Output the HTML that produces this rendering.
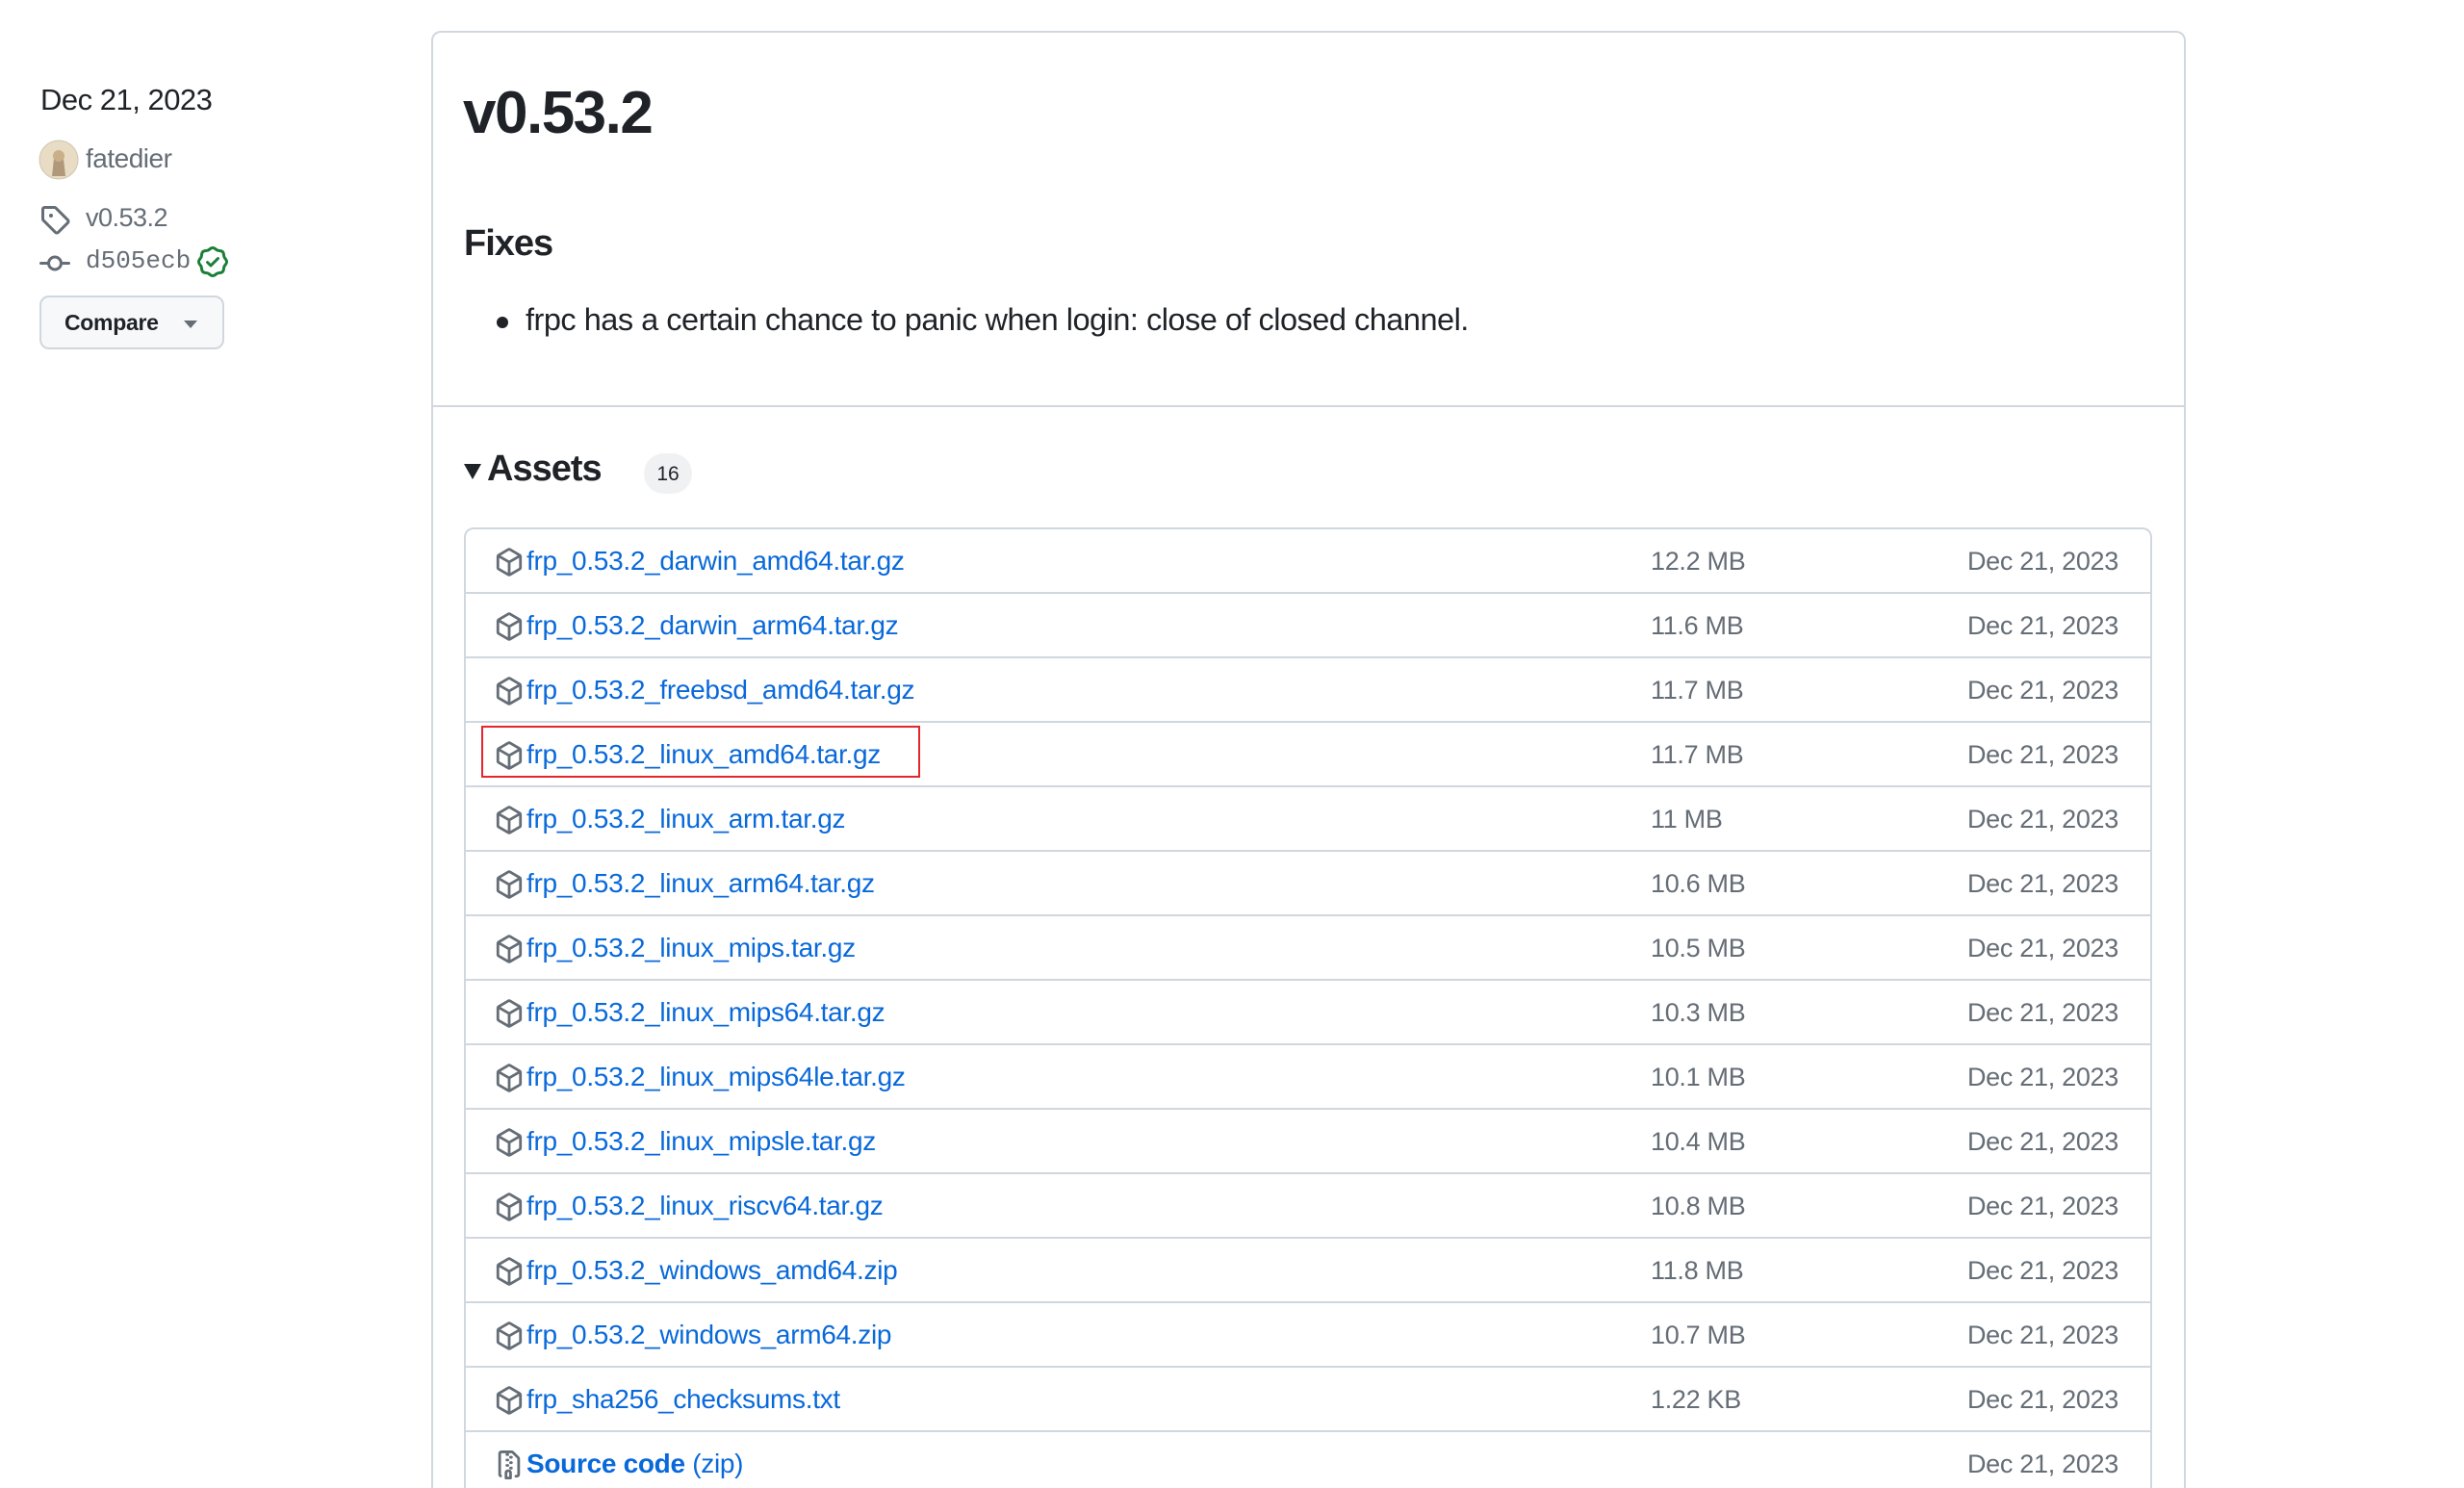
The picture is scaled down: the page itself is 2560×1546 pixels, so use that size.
<!DOCTYPE html>
<html><head><meta charset="utf-8"><style>
*{margin:0;padding:0;box-sizing:border-box}
html,body{width:2560px;height:1546px;overflow:hidden}
body{background:#fff;font-family:"Liberation Sans",sans-serif;color:#1f2328;position:relative}
.a{position:absolute;white-space:nowrap}
.card{position:absolute;left:448px;top:32px;width:1823px;height:1514px;border:2px solid #d0d7de;border-bottom:none;border-radius:10px 10px 0 0}
.div{position:absolute;left:448px;top:421px;width:1823px;height:2px;background:#d0d7de}
.tbl{position:absolute;left:482px;top:548px;width:1754px;height:998px;border:2px solid #d0d7de;border-bottom:none;border-radius:10px 10px 0 0}
.row{position:absolute;left:484px;width:1750px;height:67px;border-bottom:2px solid #d0d7de}
.row .ic{position:absolute;left:30px;top:19px}
.row .ln{position:absolute;left:63px;top:17px;font-size:28px;color:#0969da;letter-spacing:-0.3px}
.row .sz{position:absolute;left:1231px;top:18px;font-size:27px;color:#656d76;letter-spacing:-0.3px}
.row .dt{position:absolute;right:33px;top:18px;font-size:27px;color:#656d76;letter-spacing:-0.3px}
</style></head><body>
<div class="a" style="left:42px;top:86px;font-size:31px;letter-spacing:-0.5px">Dec 21, 2023</div>
<svg class="a" style="left:40px;top:145px" width="42" height="42"><circle cx="21" cy="21" r="20" fill="#e8dcc4" stroke="#d0c5b0"/><path d="M14 38 L16 20 Q21 10 26 20 L28 38Z" fill="#8b6b4a" opacity=".6"/><circle cx="21" cy="17" r="6" fill="#c9b089"/></svg>
<div class="a" style="left:89px;top:149px;font-size:28px;color:#656d76;letter-spacing:-0.5px">fatedier</div>
<svg class="a" style="left:41px;top:212px" width="32" height="32" viewBox="0 0 16 16"><path fill="#656d76" d="M1 7.775V2.75C1 1.784 1.784 1 2.75 1h5.025c.464 0 .91.184 1.238.513l6.25 6.25a1.75 1.75 0 0 1 0 2.474l-5.026 5.026a1.75 1.75 0 0 1-2.474 0l-6.25-6.25A1.752 1.752 0 0 1 1 7.775Zm1.5 0c0 .066.026.13.073.177l6.25 6.25a.25.25 0 0 0 .354 0l5.025-5.025a.25.25 0 0 0 0-.354l-6.25-6.25a.25.25 0 0 0-.177-.073H2.75a.25.25 0 0 0-.25.25ZM6 5a1 1 0 1 1 0 2 1 1 0 0 1 0-2Z"/></svg>
<div class="a" style="left:89px;top:211px;font-size:27px;color:#656d76;letter-spacing:-0.5px">v0.53.2</div>
<svg class="a" style="left:41px;top:258px" width="32" height="32" viewBox="0 0 16 16"><path fill="#656d76" d="M11.93 8.5a4.002 4.002 0 0 1-7.860 0H.75a.75.75 0 0 1 0-1.5h3.32a4.002 4.002 0 0 1 7.86 0h3.32a.75.75 0 0 1 0 1.5Zm-1.43-.75a2.5 2.5 0 1 0-5 0 2.5 2.5 0 0 0 5 0Z"/></svg>
<div class="a" style="left:89px;top:256px;font-size:26px;color:#656d76;font-family:'Liberation Mono',monospace">d505ecb</div>
<svg class="a" style="left:205px;top:256px" width="32" height="32" viewBox="0 0 16 16"><path fill="#1a7f37" d="m9.585.52.929.68c.153.112.331.186.518.215l1.138.175a2.678 2.678 0 0 1 2.24 2.24l.174 1.139c.029.187.103.365.215.518l.68.928a2.677 2.677 0 0 1 0 3.17l-.68.928a1.174 1.174 0 0 0-.215.518l-.175 1.138a2.678 2.678 0 0 1-2.241 2.241l-1.138.175a1.17 1.17 0 0 0-.518.215l-.928.68a2.677 2.677 0 0 1-3.17 0l-.928-.68a1.174 1.174 0 0 0-.518-.215L3.83 14.41a2.678 2.678 0 0 1-2.24-2.240l-.175-1.138a1.17 1.170 0 0 0-.215-.518l-.68-.928a2.677 2.677 0 0 1 0-3.17l.68-.928c.112-.153.186-.331.215-.518l.175-1.14a2.678 2.678 0 0 1 2.24-2.24l1.139-.175c.187-.029.365-.103.518-.215l.928-.68a2.677 2.677 0 0 1 3.17 0ZM7.303 1.728l-.927.68a2.670 2.670 0 0 1-1.18.489l-1.137.174a1.179 1.179 0 0 0-.987.987l-.174 1.136a2.677 2.677 0 0 1-.489 1.18l-.68.928a1.18 1.18 0 0 0 0 1.394l.68.927c.256.348.424.753.489 1.18l.174 1.137c.078.509.478.909.987.987l1.136.174a2.67 2.67 0 0 1 1.18.489l.928.68c.414.305.979.305 1.394 0l.927-.68a2.67 2.67 0 0 1 1.18-.489l1.137-.174a1.18 1.18 0 0 0 .987-.987l.174-1.136a2.67 2.67 0 0 1 .489-1.18l.68-.928a1.176 1.176 0 0 0 0-1.394l-.68-.927a2.686 2.686 0 0 1-.489-1.18l-.174-1.137a1.179 1.179 0 0 0-.987-.987l-1.136-.174a2.677 2.677 0 0 1-1.18-.489l-.928-.68a1.176 1.176 0 0 0-1.394 0ZM11.28 6.78l-3.750 3.75a.75.75 0 0 1-1.06 0L4.72 8.78a.751.751 0 0 1 .018-1.042.751.751 0 0 1 1.042-.018l1.22 1.22 3.22-3.22a.751.751 0 0 1 1.042.018.751.751 0 0 1 .018 1.042Z"/></svg>
<div class="a" style="left:41px;top:307px;width:192px;height:56px;border:2px solid #d0d7de;border-radius:10px;background:#f6f8fa"></div>
<div class="a" style="left:67px;top:322px;font-size:23px;font-weight:bold;letter-spacing:-0.3px">Compare</div>
<div class="a" style="left:191px;top:333px;width:0;height:0;border-left:7px solid transparent;border-right:7px solid transparent;border-top:8px solid #656d76"></div>

<div class="card"></div>
<div class="div"></div>
<div class="a" style="left:481px;top:82px;font-size:62px;font-weight:bold;letter-spacing:-1.5px">v0.53.2</div>
<div class="a" style="left:482px;top:232px;font-size:38px;font-weight:bold;letter-spacing:-1px">Fixes</div>
<div class="a" style="left:516px;top:329px;width:12px;height:12px;border-radius:50%;background:#1f2328"></div>
<div class="a" style="left:546px;top:314px;font-size:32.5px;letter-spacing:-0.5px">frpc has a certain chance to panic when login: close of closed channel.</div>
<div class="a" style="left:482px;top:482px;width:0;height:0;border-left:9px solid transparent;border-right:9px solid transparent;border-top:16px solid #1f2328"></div>
<div class="a" style="left:506px;top:466px;font-size:38px;font-weight:bold;letter-spacing:-1px">Assets</div>
<div class="a" style="left:669px;top:471px;width:50px;height:42px;border-radius:21px;background:#eff1f3;font-size:21px;text-align:center;line-height:44px">16</div>

<div class="tbl"></div>
<div id="rows"></div>
<div class="a" style="left:500px;top:754px;width:456px;height:54px;border:2px solid #e5262b"></div>
<script>
var n=["frp_0.53.2_darwin_amd64.tar.gz","12.2 MB","frp_0.53.2_darwin_arm64.tar.gz","11.6 MB","frp_0.53.2_freebsd_amd64.tar.gz","11.7 MB","frp_0.53.2_linux_amd64.tar.gz","11.7 MB","frp_0.53.2_linux_arm.tar.gz","11 MB","frp_0.53.2_linux_arm64.tar.gz","10.6 MB","frp_0.53.2_linux_mips.tar.gz","10.5 MB","frp_0.53.2_linux_mips64.tar.gz","10.3 MB","frp_0.53.2_linux_mips64le.tar.gz","10.1 MB","frp_0.53.2_linux_mipsle.tar.gz","10.4 MB","frp_0.53.2_linux_riscv64.tar.gz","10.8 MB","frp_0.53.2_windows_amd64.zip","11.8 MB","frp_0.53.2_windows_arm64.zip","10.7 MB","frp_sha256_checksums.txt","1.22 KB"];
var pk='<svg class="ic" width="30" height="30" viewBox="0 0 16 16"><path fill="#656d76" d="m8.878.392 5.25 3.045c.54.314.872.89.872 1.514v6.098a1.75 1.75 0 0 1-.872 1.514l-5.25 3.045a1.75 1.75 0 0 1-1.756 0l-5.25-3.045A1.75 1.75 0 0 1 1 11.049V4.951c0-.624.332-1.201.872-1.514L7.122.392a1.75 1.75 0 0 1 1.756 0ZM7.875 1.69l-4.63 2.685L8 7.133l4.755-2.758-4.63-2.685a.248.248 0 0 0-.25 0ZM2.5 5.677v5.372c0 .09.047.171.125.216l4.625 2.683V8.432Zm6.25 8.271 4.625-2.683a.25.25 0 0 0 .125-.216V5.677L8.75 8.432Z"/></svg>';
var h='';
for(var i=0;i<n.length;i+=2){var t=550+(i/2)*67;
h+='<div class="row" style="top:'+t+'px">'+pk+'<div class="ln">'+n[i]+'</div><div class="sz">'+n[i+1]+'</div><div class="dt">Dec 21, 2023</div></div>';}
var t=550+14*67;
h+='<div class="row" style="top:'+t+'px"><svg class="ic" width="30" height="30" viewBox="0 0 16 16"><path fill="#656d76" d="M3.5 1.75v11.5c0 .09.048.173.126.217a.75.75 0 0 1-.752 1.298A1.748 1.748 0 0 1 2 13.25V1.75C2 .784 2.784 0 3.75 0h5.586c.464 0 .909.185 1.237.513l2.914 2.914c.329.328.513.773.513 1.237v8.586A1.75 1.75 0 0 1 12.25 15h-.5a.75.75 0 0 1 0-1.5h.5a.25.25 0 0 0 .25-.25V4.664a.25.25 0 0 0-.073-.177L9.513 1.573a.25.25 0 0 0-.177-.073H7.25a.75.75 0 0 1 0 1.5h-.5a.75.75 0 0 1 0-1.5h-3a.25.25 0 0 0-.25.25Zm3.75 8.75h.5c.966 0 1.750.784 1.750 1.75v3a.75.75 0 0 1-.75.75h-2.5a.75.75 0 0 1-.75-.75v-3c0-.966.784-1.75 1.75-1.75ZM6 5.25a.75.75 0 0 1 .75-.75h.5a.75.75 0 0 1 0 1.5h-.5A.75.75 0 0 1 6 5.25Zm.75 2.25h.5a.75.75 0 0 1 0 1.5h-.5a.75.75 0 0 1 0-1.5ZM8 6.75A.75.75 0 0 1 8.750 6h.5a.75.75 0 0 1 0 1.5h-.5A.75.75 0 0 1 8 6.75ZM8.75 3h.5a.75.75 0 0 1 0 1.5h-.5a.75.75 0 0 1 0-1.5ZM8 9.75A.75.75 0 0 1 8.75 9h.5a.75.75 0 0 1 0 1.5h-.5A.75.75 0 0 1 8 9.75Zm-1 2.5v2.25h1v-2.25a.25.25 0 0 0-.25-.25h-.5a.25.25 0 0 0-.25.25Z"/></svg><div class="ln"><b>Source code</b> (zip)</div><div class="dt">Dec 21, 2023</div></div>';
document.getElementById('rows').innerHTML=h;
</script>
</body></html>
